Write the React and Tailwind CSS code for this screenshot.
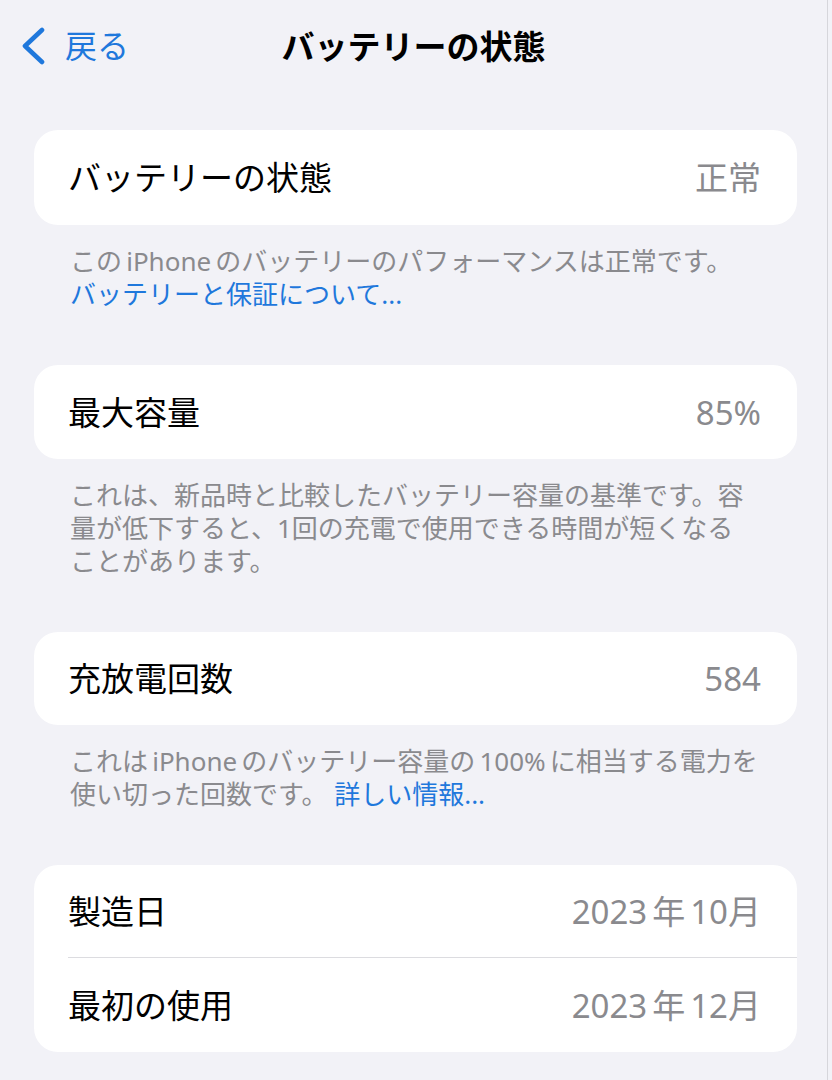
const FONT = { fontFamily: '"Noto Sans", "Noto Sans CJK JP", sans-serif' };

// latin words inside Japanese text get a little air on both sides, like iOS
const Lat = ({ children }) => <span className="mx-[0.16em]">{children}</span>;

const Row = ({ label, value, className = '' }) => (
  <div className={`flex items-center justify-between pl-[34px] pr-[36px] ${className}`}>
    <span className="text-[33px] leading-none text-black">{label}</span>
    <span className="text-[33px] leading-none text-[#8a8a8e]">{value}</span>
  </div>
);

const Card = ({ children }) => (
  <div className="ml-[34px] mr-[30px] rounded-[24px] bg-white overflow-hidden">{children}</div>
);

const Footer = ({ children }) => (
  <p className="mt-[20px] mb-[54px] pl-[70px] pr-4 text-[26px] leading-[33px] text-[#8a8a8e] whitespace-nowrap">
    {children}
  </p>
);

const Link = ({ children }) => <span className="text-[#1f78dc]">{children}</span>;

const Month = ({ y, m }) => (
  <>
    {y}
    <span className="mx-[5px]">年</span>
    {m}月
  </>
);

export default function App() {
  return (
    <div className="min-h-[1080px] w-[832px] bg-[#f2f2f7] overflow-hidden" style={FONT}>
      <div className="w-[828px] min-h-[1080px] border-r border-[#d6d6db]">
        {/* nav bar */}
        <div className="relative h-[130px]">
          <div className="flex items-center h-[92px] pl-[20px] text-[#1f78dc]">
            <svg width="26" height="38" viewBox="0 0 26 38" fill="none">
              <path d="M22 3 L5 19 L22 35" stroke="currentColor" strokeWidth="4.6" strokeLinecap="round" strokeLinejoin="round" />
            </svg>
            <span className="text-[32px] leading-none ml-[19px]">戻る</span>
          </div>
          <div className="absolute top-0 left-0 right-0 h-[92px] flex items-center justify-center pointer-events-none">
            <span className="text-[33px] leading-none font-bold text-black">バッテリーの状態</span>
          </div>
        </div>

        <Card>
          <Row label="バッテリーの状態" value="正常" className="h-[95px]" />
        </Card>
        <Footer>
          この<Lat>iPhone</Lat>のバッテリーのパフォーマンスは正常です。
          <br />
          <Link>バッテリーと保証について...</Link>
        </Footer>

        <Card>
          <Row label="最大容量" value="85%" className="h-[94px]" />
        </Card>
        <Footer>
          これは、新品時と比較したバッテリー容量の基準です。容
          <br />
          量が低下すると、1回の充電で使用できる時間が短くなる
          <br />
          ことがあります。
        </Footer>

        <Card>
          <Row label="充放電回数" value="584" className="h-[93px]" />
        </Card>
        <Footer>
          これは<Lat>iPhone</Lat>のバッテリー容量の<Lat>100%</Lat>に相当する電力を
          <br />
          使い切った回数です。 <Link>詳しい情報...</Link>
        </Footer>

        <Card>
          <Row label="製造日" value={<Month y="2023" m="10" />} className="h-[92px]" />
          <div className="ml-[34px] h-px bg-[#dcdce0]" />
          <Row label="最初の使用" value={<Month y="2023" m="12" />} className="h-[94px]" />
        </Card>
      </div>
    </div>
  );
}
